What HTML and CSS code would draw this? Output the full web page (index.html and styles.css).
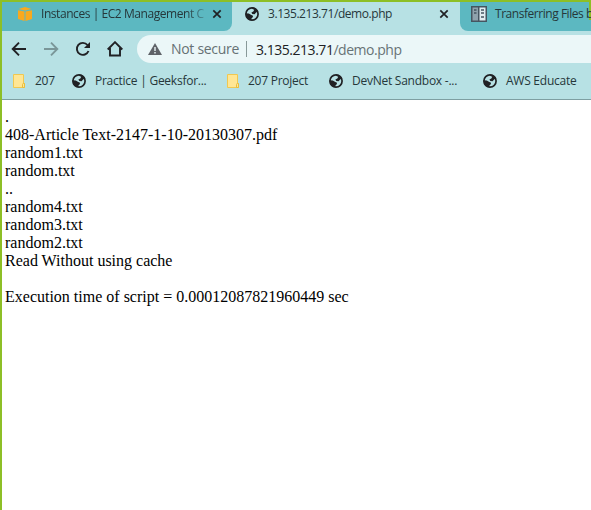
FILE: index.html
```html
<!DOCTYPE html>
<html lang="en">
<head>
<meta charset="utf-8">
<title>3.135.213.71/demo.php</title>
<link rel="stylesheet" href="styles.css">
</head>
<body>
<svg class="defs" aria-hidden="true">
  <symbol id="globe" viewBox="0 0 14 14"><circle cx="7" cy="7" r="6.1" fill="none" stroke="#202124" stroke-width="1.7"/><path fill="#202124" d="M7 .5C10 .5 12.400 2 13.300 5L11.300 5.300 9.600 7.300 7.300 7 6.400 5.400 8.300 4.600 9.300 2.800 7.500 2ZM.6 6.300 3.800 6.600 6.300 8 7.700 8.600 8 10 6.600 11.200 6.300 13.300C2.700 13 .3 10 .6 6.300Z"/></symbol>
  <symbol id="close" viewBox="0 0 10 10"><path d="M1.300 1.300 8.700 8.700M8.700 1.300 1.300 8.700" fill="none" stroke="#202124" stroke-width="1.700"/></symbol>
  <symbol id="folder" viewBox="0 0 12 14"><path d="M.5.5h10v9h1v4H.5Z" fill="#ffe694" stroke="#f0c850"/><path d="M9.500 13V10.500q0-1 1-1h1v4H9.500Z" fill="#ffe694" stroke="#e8bd3c"/></symbol>
</svg>
<div class="window">
  <header class="tabs">
    <div class="tab first">
      <svg class="cube" viewBox="0 0 14 14"><path fill="#f9a91e" d="M0 3.300 6.500 4.500V14L0 12ZM7.500 4.500 14 3.300V12L7.500 14ZM.5 2 7 0 13.500 2 7 3.500Z"/></svg>
      <span class="label fade">Instances | EC2 Management C</span>
      <svg class="close"><use href="#close"/></svg>
    </div>
    <div class="tab active">
      <svg class="globe"><use href="#globe"/></svg>
      <span class="label">3.135.213.71/demo.php</span>
      <svg class="close"><use href="#close"/></svg>
    </div>
    <div class="tab last">
      <svg class="book" viewBox="0 0 16 16"><path fill="#455560" d="M0 0h16v16H0Z"/><path fill="#8fa2ac" d="M1.500 1.500h5.500v13H1.500Z"/><path fill="#e1edf0" d="M8.500 1.500h6v13h-6Z"/><path d="M3 4h2.500M3 7h2.500M10 4h3M10 7h3M10 11h3" stroke="#455560" stroke-width="1.500"/></svg>
      <span class="label">Transferring Files b</span>
    </div>
  </header>
  <nav class="toolbar">
    <svg class="nav" viewBox="0 0 16 16"><path d="M15 8H2M8 1.700 1.700 8 8 14.300" stroke="#202124"/></svg>
    <svg class="nav" viewBox="0 0 16 16"><path d="M1 8H14M8 1.700 14.300 8 8 14.300" stroke="#7a9698"/></svg>
    <svg class="nav" viewBox="0 0 16 16"><path d="M13.500 10A6 6 0 1 1 12.500 4" stroke="#202124"/><path d="M15 1v6H9Z" fill="#202124" stroke="none"/></svg>
    <svg class="nav" viewBox="0 0 16 16"><path d="M.7 8.500 8 1.200 15.300 8.500M3 7V14.500H13V7" stroke="#202124"/></svg>
    <div class="address">
      <svg class="warning" viewBox="0 0 14 12"><path fill="#5f6368" d="M7 0 14 12H0Z"/><path fill="#ebf7f8" d="M6.300 4h1.400v4H6.300ZM6.300 9h1.400v1.500H6.300Z"/></svg>
      <span class="security">Not secure</span>
      <span class="url">3.135.213.71<span class="path">/demo.php</span></span>
    </div>
  </nav>
  <nav class="bookmarks">
    <a class="mark m1"><svg class="folder"><use href="#folder"/></svg><span>207</span></a>
    <a class="mark m2"><svg class="globe"><use href="#globe"/></svg><span>Practice | Geeksfor...</span></a>
    <a class="mark m3"><svg class="folder"><use href="#folder"/></svg><span>207 Project</span></a>
    <a class="mark m4"><svg class="globe"><use href="#globe"/></svg><span>DevNet Sandbox -...</span></a>
    <a class="mark m5"><svg class="globe"><use href="#globe"/></svg><span>AWS Educate</span></a>
  </nav>
  <main class="page">.<br>408-Article Text-2147-1-10-20130307.pdf<br>random1.txt<br>random.txt<br>..<br>random4.txt<br>random3.txt<br>random2.txt<br>Read Without using cache<br><br>Execution time of script = 0.00012087821960449 sec</main>
</div>
</body>
</html>
```
FILE: styles.css
```css
* { box-sizing: border-box; }
body { margin: 0; background: #fff; overflow: hidden; }
.defs { position: absolute; width: 0; height: 0; }
.window { height: 510px; border-left: 2px solid #8dbf26; border-top: 2px solid #8dbf26; }
svg { flex: none; display: block; }
.tabs, .toolbar, .bookmarks { background: #b7e1e4; color: #26373a; font-family: "Open Sans", sans-serif; white-space: nowrap; overflow: hidden; }
.tabs { display: flex; height: 33px; align-items: flex-start; font-size: 12px; letter-spacing: -.44px; }
.tab { display: flex; align-items: center; height: 29px; padding-bottom: 5px; flex: none; }
.first { width: 230px; padding-left: 16px; background: #5cb8c1; border-bottom-right-radius: 8px; }
.active { width: 228px; padding-left: 13px; }
.last { width: 131px; padding-left: 11px; background: linear-gradient(#8dbf26, #8dbf26) right top / 2px 18px no-repeat #5cb8c1; border-bottom-left-radius: 8px; }
.cube { width: 14px; height: 14px; }
.globe { width: 14px; height: 14px; }
.book { width: 16px; height: 16px; }
.label { margin-left: 9px; width: 163px; line-height: 20px; }
.active .label { width: 170px; }
.last .label { margin-left: 8px; width: 96px; letter-spacing: -.46px; }
.fade { mask-image: linear-gradient(90deg, #000 145px, transparent 170px); }
.close { width: 10px; height: 10px; margin-left: 8px; }
.active .close { margin-left: 1px; }
.toolbar { display: flex; align-items: center; height: 28px; padding-left: 9px; }
.nav { width: 16px; height: 16px; margin-right: 16px; fill: none; stroke-width: 1.900; }
.address { display: flex; flex: 1; height: 28px; margin-left: -2px; padding-left: 11px; align-items: center; background: #ebf7f8; border-radius: 14px 0 0 14px; font-size: 14px; letter-spacing: -.47px; }
.warning { width: 14px; height: 12px; }
.security { color: #667174; margin-left: 9px; width: 76px; height: 16px; line-height: 16px; border-right: 1px solid #899; letter-spacing: -.3px; }
.url { margin-left: 9px; color: #202124; }
.path { color: #687376; }
.bookmarks { display: flex; height: 37px; border-bottom: 1px solid #7e9fa2; padding-left: 11px; font-size: 12px; letter-spacing: -.25px; }
.mark { display: flex; align-items: center; height: 36px; flex: none; }
.folder { width: 12px; height: 14px; }
.mark span { margin-left: 9px; line-height: 20px; }
.m1 { width: 59px; }
.m1 span { margin-left: 10px; }
.m2 { width: 155px; }
.m3 { width: 102px; }
.m4 { width: 154px; }
.page { padding: 8px 3px; font: 16px/18px "Liberation Serif", serif; color: #000; }
```
